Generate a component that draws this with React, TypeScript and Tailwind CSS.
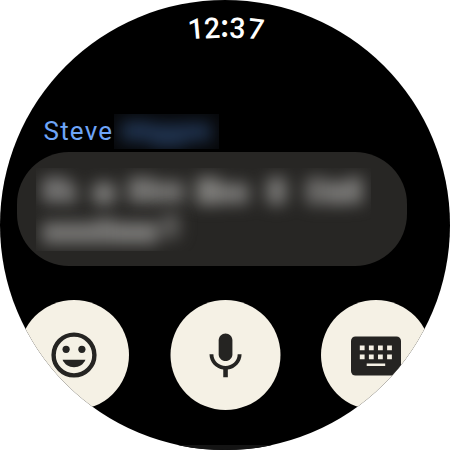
import React from "react";

function Clock() {
  return (
    <div className="flex h-[58px] items-start justify-center pt-[18px] font-[Roboto,sans-serif] text-[28.5px] leading-[24px] font-medium text-white">
      <div className="ml-[3px] flex">
        <span className="block w-[14px] -rotate-5 text-center">1</span>
        <span className="ml-[2px] block w-[16px] -translate-y-px -rotate-3 text-center">2</span>
        <span className="block w-[9px] -translate-y-px text-center font-[Lato,sans-serif] text-[32px] leading-[15px] font-bold">
          :
        </span>
        <span className="block w-[17px] -translate-y-px rotate-2 text-center">3</span>
        <span className="ml-px block w-[18px] rotate-7 text-center">7</span>
      </div>
    </div>
  );
}

function ActionButton({ children }: { children: React.ReactNode }) {
  return (
    <button className="flex size-[110px] shrink-0 items-center justify-center rounded-full bg-[#f5f1e5] text-[#252422]">
      {children}
    </button>
  );
}

export default function App() {
  return (
    <div className="size-[450px] bg-white">
      <div className="flex size-[450px] flex-col overflow-hidden rounded-full bg-black">
        <Clock />

        <div className="mt-[56px] flex h-[35px] pl-[43.5px]">
          <span className="w-[70.5px] font-[Roboto,sans-serif] text-[26px] leading-[34px] tracking-[1.2px] text-[#6ea5f8]">
            Steve
          </span>
          <div className="h-[35px] w-[105px] overflow-hidden bg-[#07080a] px-[7px] pt-[7px]">
            <div className="flex items-start blur-[8px]">
              <i className="h-[20px] w-[30px] bg-[#20334f]" />
              <i className="mt-[3px] h-[23px] w-[34px] bg-[#20334f]" />
              <i className="mt-[2px] h-[18px] w-[26px] bg-[#20334f]" />
            </div>
          </div>
        </div>

        <div className="mt-[3px] ml-[17px] h-[114px] w-[390px] shrink-0 rounded-[52px] bg-[#272624] pt-[16px] pl-[19px]">
          <div className="h-[83px] w-[335px] overflow-hidden pt-[9px] pl-[6px]">
            <div className="flex h-[41px] items-start blur-[7.5px]">
              <i className="h-[26px] w-[26px] rounded-[4px] bg-[#727170]" />
              <i className="mt-[5px] h-[23px] w-[9px] rounded-[4px] bg-[#6b6a68]" />
              <i className="mt-[5px] ml-[15px] h-[23px] w-[24px] rounded-[6px] bg-[#777674]" />
              <i className="ml-[12px] h-[26px] w-[26px] bg-[#747371]" />
              <i className="mt-[4px] h-[22px] w-[30px] bg-[#6f6e6c]" />
              <i className="ml-[12px] h-[28px] w-[24px] bg-[#7d7c79]" />
              <i className="mt-[6px] h-[21px] w-[29px] bg-[#747371]" />
              <i className="ml-[17px] h-[28px] w-[21px] rounded-[5px] bg-[#747371]" />
              <i className="ml-[18px] h-[28px] w-[22px] rounded-[6px] bg-[#696866]" />
              <i className="mt-[4px] h-[24px] w-[20px] bg-[#767573]" />
              <i className="h-[27px] w-[16px] bg-[#767573]" />
            </div>
            <div className="flex items-start blur-[7.5px]">
              <i className="mt-[4px] h-[22px] w-[54px] bg-[#747371]" />
              <i className="h-[26px] w-[18px] bg-[#747371]" />
              <i className="mt-[4px] h-[22px] w-[44px] bg-[#787775]" />
              <i className="-mt-[5px] ml-[3px] h-[26px] w-[19px] rounded-[6px] bg-[#595856]" />
            </div>
          </div>
        </div>

        <div className="mt-[34px] ml-[19px] flex shrink-0 gap-[41px]">
          <ActionButton>
            <svg width="46" height="46" viewBox="-23 -23 46 46" fill="currentColor">
              <circle r="20.4" fill="none" stroke="currentColor" strokeWidth="4.4" />
              <circle cx="-7.9" cy="-5.7" r="3.6" />
              <circle cx="7.9" cy="-5.7" r="3.6" />
              <path d="M-11.4 4.7H11.4C9.6 9.3 5.2 12.2 0 12.2S-9.6 9.3-11.4 4.7Z" />
            </svg>
          </ActionButton>
          <div className="flex shrink-0 translate-x-[0.5px]">
            <ActionButton>
              <svg className="mt-[3px]" width="55" height="55" viewBox="0.2 0 24 24" fill="currentColor">
                <path d="M12 14c1.66 0 3-1.34 3-3V5c0-1.66-1.34-3-3-3S9 3.34 9 5v6c0 1.66 1.34 3 3 3Z" />
                <path d="M17.3 11c0 3-2.54 5.1-5.3 5.1S6.7 14 6.7 11H5c0 3.41 2.72 6.23 6 6.72V21h2v-3.28c3.28-.48 6-3.3 6-6.72h-1.7Z" />
              </svg>
            </ActionButton>
          </div>
          <ActionButton>
            <svg className="mt-px" width="50" height="40" viewBox="0 0 50 40">
              <rect y="0.4" width="50" height="39.2" rx="4.5" fill="currentColor" />
              <path
                d="M8.8 9.5h4.8v4.8H8.8zM17.9 9.5h4.8v4.8h-4.8zM27 9.5h4.8v4.8H27zM36.1 9.5h4.8v4.8h-4.8zM8.8 18.5h4.8v4.8H8.8zM17.9 18.5h4.8v4.8h-4.8zM27 18.5h4.8v4.8H27zM36.1 18.5h4.8v4.8h-4.8zM15.7 27.5h18.5v2.6H15.7z"
                fill="#f5f1e5"
              />
            </svg>
          </ActionButton>
        </div>

        <div className="mt-auto h-[5px] shrink-0 bg-[#141414]" />
      </div>
    </div>
  );
}
